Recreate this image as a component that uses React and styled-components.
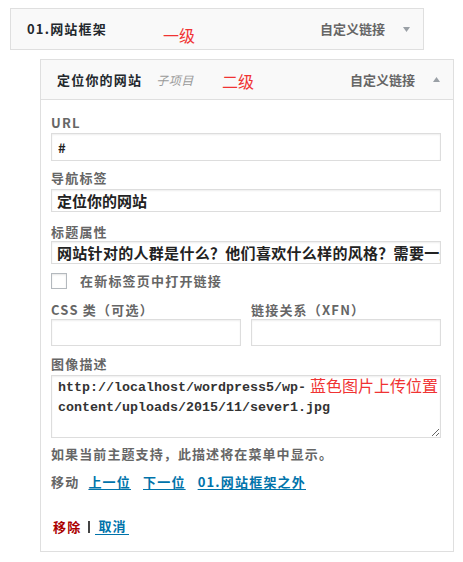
import React from 'react';
import styled, { createGlobalStyle } from 'styled-components';

const Global = createGlobalStyle`
  html, body { margin: 0; padding: 0; background: #fff; }
  body { font-family: "Noto Sans CJK SC", "Noto Sans", sans-serif; }
`;

const Page = styled.div`
  display: flex;
  flex-direction: column;
  align-items: flex-start;
  padding: 8px 0 0 10px;
`;

const Card = styled.div`
  box-sizing: border-box;
  width: 414px;
  margin: ${p => p.$mt || 0}px 0 0 ${p => p.$ml || 0}px;
  border: 1px solid #dfdfdf;
  background: #fff;
`;

const Header = styled.div`
  position: relative;
  box-sizing: border-box;
  height: 40px;
  display: flex;
  align-items: center;
  padding: 0 13px 0 16px;
  background: #f9f9f9;
  border-bottom: ${p => (p.$open ? '1px solid #dfdfdf' : 'none')};
`;

const Title = styled.span`
  font-size: 13px;
  line-height: 16px;
  font-weight: 700;
  letter-spacing: 1.2px;
  color: #23282d;
`;

const Sub = styled.span`
  margin-left: 14px;
  font-size: 12px;
  line-height: 16px;
  font-style: italic;
  letter-spacing: 0.5px;
  color: #999;
`;

const Spacer = styled.span`
  flex: 1;
`;

const Type = styled.span`
  font-size: 13px;
  line-height: 16px;
  font-weight: 700;
  color: #666;
`;

const ArrowIcon = styled.svg`
  display: block;
  margin-left: 18px;
  width: 7px;
  height: 5px;
`;

const Note = styled.span`
  position: absolute;
  left: ${p => p.$x}px;
  top: ${p => p.$y}px;
  font-size: 16px;
  line-height: 20px;
  font-weight: 400;
  color: #f03333;
  white-space: nowrap;
`;

const Body = styled.div`
  display: flex;
  flex-direction: column;
  padding: 15px 12px 16px 10px;
`;

const Label = styled.div`
  margin-top: ${p => p.$mt || 0}px;
  margin-bottom: ${p => p.$mb || 0}px;
  font-size: 13px;
  line-height: 16px;
  font-weight: 700;
  letter-spacing: 1.2px;
  color: #666;
`;

const TextInput = styled.input`
  display: block;
  box-sizing: border-box;
  width: 100%;
  height: ${p => p.$h}px;
  margin: 0;
  padding: 0 ${p => p.$pr ?? 6}px 0 ${p => p.$pl ?? 6}px;
  border: 1px solid #ddd;
  border-radius: 0;
  box-shadow: inset 0 1px 2px rgba(0, 0, 0, 0.07);
  background: #fff;
  font-family: "Noto Sans CJK SC", "Noto Sans", sans-serif;
  font-size: ${p => p.$fs || 13}px;
  letter-spacing: ${p => p.$ls || 0}px;
  font-weight: 700;
  color: #222;
  outline: none;
`;

const CheckRow = styled.label`
  display: flex;
  align-items: center;
  gap: 13px;
  margin-top: 9px;
  height: 16px;
`;

const Box = styled.span`
  box-sizing: border-box;
  width: 16px;
  height: 16px;
  border: 1px solid #b4b9be;
  background: #fff;
  box-shadow: inset 0 1px 2px rgba(0, 0, 0, 0.1);
`;

const CheckText = styled.span`
  font-size: 13px;
  line-height: 16px;
  font-weight: 700;
  letter-spacing: 1.2px;
  color: #666;
`;

const Columns = styled.div`
  display: grid;
  grid-template-columns: 1fr 1fr;
  column-gap: 10px;
  margin-top: 13px;
`;

const Column = styled.div`
  display: flex;
  flex-direction: column;
`;

const AreaWrap = styled.div`
  position: relative;
`;

const Area = styled.textarea`
  display: block;
  box-sizing: border-box;
  width: 100%;
  height: 63px;
  margin: 0;
  padding: 2px 6px;
  border: 1px solid #ddd;
  border-radius: 0;
  box-shadow: inset 0 1px 2px rgba(0, 0, 0, 0.07);
  font-family: "Liberation Mono", "Courier New", monospace;
  font-size: 13.33px;
  line-height: 20px;
  font-weight: 700;
  color: #333;
  outline: none;
  resize: vertical;
`;

const Desc = styled.div`
  margin-top: 8px;
  font-size: 13px;
  line-height: 16px;
  font-weight: 700;
  letter-spacing: 1.1px;
  color: #666;
`;

const MoveRow = styled.div`
  display: flex;
  align-items: center;
  gap: 12px;
  margin-top: 12px;
  font-size: 13px;
  line-height: 16px;
  font-weight: 700;
  letter-spacing: 1.2px;
`;

const MoveLabel = styled.span`
  color: #666;
  margin-right: -3px;
`;

const Link = styled.a`
  color: #0073aa;
  text-decoration: underline;
  text-underline-offset: 2px;
  cursor: pointer;
`;

const Actions = styled.div`
  display: flex;
  align-items: center;
  margin-top: 28px;
  font-size: 13px;
  line-height: 16px;
  font-weight: 700;
  letter-spacing: 1.2px;
`;

const Delete = styled.a`
  color: #aa0000;
  padding-left: 2px;
  cursor: pointer;
`;

const Sep = styled.span`
  display: inline-block;
  width: 2px;
  height: 12px;
  margin: 0 5px 0 7px;
  background: #444;
`;

const Cancel = styled.a`
  display: inline-block;
  padding: 0 2px 0 3px;
  color: #0073aa;
  border-bottom: 1px solid #0073aa;
  line-height: 16px;
  cursor: pointer;
`;

function Arrow({ up }) {
  return (
    <ArrowIcon viewBox="0 0 7 5">
      <polygon points={up ? '0,5 7,5 3.5,0' : '0,0 7,0 3.5,5'} fill="#9aa0a6" />
    </ArrowIcon>
  );
}

export default function App() {
  return (
    <>
      <Global />
      <Page>
        <Card>
          <Header>
            <Title>01.网站框架</Title>
            <Spacer />
            <Type>自定义链接</Type>
            <Arrow />
            <Note $x={152} $y={16}>一级</Note>
          </Header>
        </Card>

        <Card $mt={9} $ml={30}>
          <Header $open>
            <Title>定位你的网站</Title>
            <Sub>子项目</Sub>
            <Spacer />
            <Type>自定义链接</Type>
            <Arrow up />
            <Note $x={181} $y={11}>二级</Note>
          </Header>
          <Body>
            <Label $mb={2}>URL</Label>
            <TextInput $h={28} readOnly value="#" />

            <Label $mt={9} $mb={3}>导航标签</Label>
            <TextInput $h={23} $fs={15} $pl={5} readOnly value="定位你的网站" />

            <Label $mt={12} $mb={1}>标题属性</Label>
            <TextInput
              $h={23}
              $fs={15}
              $ls={0.3}
              $pl={5}
              $pr={0}
              readOnly
              value="网站针对的人群是什么？他们喜欢什么样的风格？需要一些什么样的功能？"
            />

            <CheckRow>
              <Box />
              <CheckText>在新标签页中打开链接</CheckText>
            </CheckRow>

            <Columns>
              <Column>
                <Label $mb={1}>CSS 类（可选）</Label>
                <TextInput $h={27} readOnly value="" />
              </Column>
              <Column>
                <Label $mb={1}>链接关系（XFN）</Label>
                <TextInput $h={27} readOnly value="" />
              </Column>
            </Columns>

            <Label $mt={10} $mb={3}>图像描述</Label>
            <AreaWrap>
              <Area readOnly value="http://localhost/wordpress5/wp-content/uploads/2015/11/sever1.jpg" />
              <Note $x={259} $y={0}>蓝色图片上传位置</Note>
            </AreaWrap>

            <Desc>如果当前主题支持，此描述将在菜单中显示。</Desc>

            <MoveRow>
              <MoveLabel>移动</MoveLabel>
              <Link>上一位</Link>
              <Link>下一位</Link>
              <Link>01.网站框架之外</Link>
            </MoveRow>

            <Actions>
              <Delete>移除</Delete>
              <Sep />
              <Cancel>取消</Cancel>
            </Actions>
          </Body>
        </Card>
      </Page>
    </>
  );
}
